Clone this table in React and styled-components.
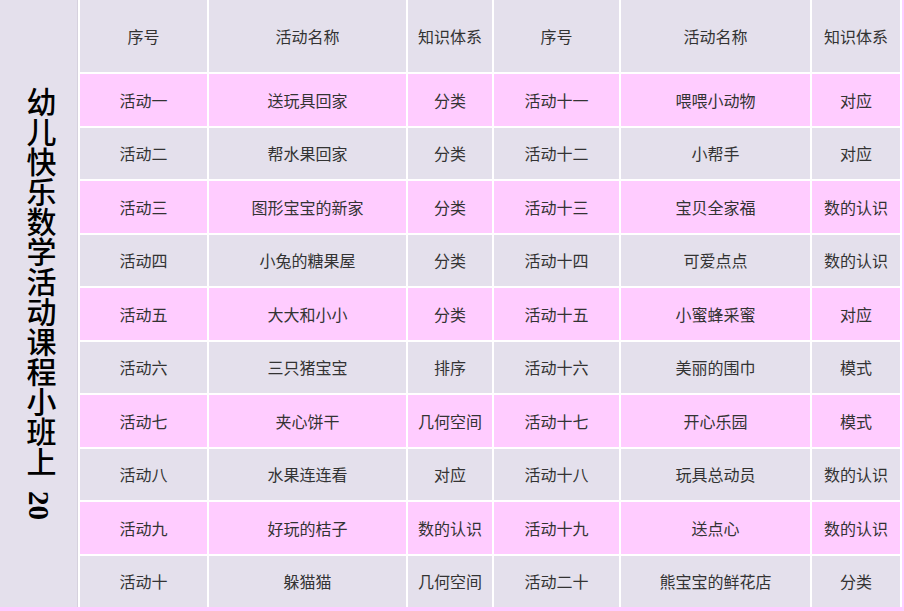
import styled, { createGlobalStyle } from "styled-components";

const lavender = "#e4e0ec";
const pink = "#ffccff";
const textColor = "#333333";

const GlobalStyle = createGlobalStyle`
  html, body {
    margin: 0;
    padding: 0;
    background: ${pink};
  }
  body {
    font-family: "Noto Sans CJK SC", "Noto Sans", sans-serif;
  }
`;

const left = [
  ["活动一", "送玩具回家", "分类"],
  ["活动二", "帮水果回家", "分类"],
  ["活动三", "图形宝宝的新家", "分类"],
  ["活动四", "小兔的糖果屋", "分类"],
  ["活动五", "大大和小小", "分类"],
  ["活动六", "三只猪宝宝", "排序"],
  ["活动七", "夹心饼干", "几何空间"],
  ["活动八", "水果连连看", "对应"],
  ["活动九", "好玩的桔子", "数的认识"],
  ["活动十", "躲猫猫", "几何空间"],
];

const right = [
  ["活动十一", "喂喂小动物", "对应"],
  ["活动十二", "小帮手", "对应"],
  ["活动十三", "宝贝全家福", "数的认识"],
  ["活动十四", "可爱点点", "数的认识"],
  ["活动十五", "小蜜蜂采蜜", "对应"],
  ["活动十六", "美丽的围巾", "模式"],
  ["活动十七", "开心乐园", "模式"],
  ["活动十八", "玩具总动员", "数的认识"],
  ["活动十九", "送点心", "数的认识"],
  ["活动二十", "熊宝宝的鲜花店", "分类"],
];

const headers = ["序号", "活动名称", "知识体系", "序号", "活动名称", "知识体系"];

const App = function () {
  return (
    <Page>
      <GlobalStyle />
      <Sidebar>
        <Title>
          幼儿快乐数学活动课程小班上 <Number>20</Number>
        </Title>
      </Sidebar>
      <Table>
        {headers.map((h, i) => (
          <Cell key={"h" + i} $pink={false}>
            {h}
          </Cell>
        ))}
        {left.map((row, r) =>
          [...row, ...right[r]].map((text, c) => (
            <Cell key={r + "-" + c} $pink={r % 2 === 0}>
              {text}
            </Cell>
          ))
        )}
      </Table>
    </Page>
  );
};

export default App;

const Page = styled.div`
  width: 904px;
  height: 611px;
  display: flex;
  align-items: flex-start;
  background: ${pink};
`;

const Sidebar = styled.div`
  width: 74px;
  height: 607px;
  background: ${lavender};
  border-right: 1px solid #d6d1de;
  padding-right: 3px;
  display: flex;
  align-items: center;
  justify-content: center;
`;

const Title = styled.div`
  writing-mode: vertical-rl;
  font-family: "Liberation Serif", "Noto Sans CJK SC", serif;
  font-size: 30px;
  font-weight: 500;
  color: #000;
  line-height: 30px;
  margin-left: 3px;
  margin-top: 0;
`;

const Number = styled.span`
  font-weight: 700;
  font-size: 29px;
  margin-top: 6px;
`;

const Table = styled.div`
  display: grid;
  grid-template-columns: 127px 197px 84px 125px 189px 88px;
  grid-template-rows: 72px repeat(10, 1fr);
  gap: 2px;
  height: 607px;
  padding: 0 2px 0 2px;
  background: #ffffff;
`;

const Cell = styled.div`
  display: flex;
  align-items: center;
  justify-content: center;
  background: ${(props) => (props.$pink ? pink : lavender)};
  color: ${textColor};
  font-size: 16px;
  white-space: nowrap;
`;
